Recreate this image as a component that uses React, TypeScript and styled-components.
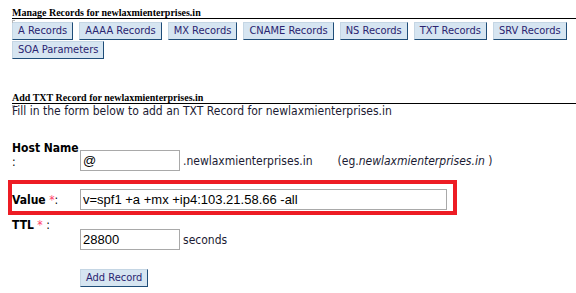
import React from 'react';
import styled, { createGlobalStyle } from 'styled-components';

const GlobalStyle = createGlobalStyle`
  body {
    margin: 0;
    background: #fff;
    font-family: "DejaVu Sans Condensed", "DejaVu Sans", sans-serif;
    font-stretch: condensed;
    font-size: 12px;
    color: #1b1b33;
  }
`;

const Page = styled.div`
  width: 564px;
  padding: 7px 0 0 12px;
`;

const SectionTitle = styled.h2<{ $gap?: number }>`
  position: relative;
  margin: ${(p) => p.$gap || 0}px 0 0;
  font: bold 10px/11px "Liberation Serif", serif;
  color: #000;
  border-bottom: 1px solid #000;
`;

const Marker = styled.span`
  position: absolute;
  left: 0;
  top: 13px;
  width: 2px;
  height: 2px;
  border-left: 1px solid #b8b8b8;
  border-top: 1px solid #b8b8b8;
`;

const ButtonBar = styled.div`
  margin-top: 3px;
  display: flex;
  flex-direction: column;
  gap: 1px;
`;

const ButtonRow = styled.div`
  display: flex;
  gap: 6px;
`;

const TabButton = styled.button<{ $indent?: number }>`
  box-sizing: border-box;
  height: 18px;
  margin: 0 0 0 ${(p) => p.$indent || 0}px;
  padding: 0 5px;
  font: 11px/16px "DejaVu Sans Condensed", "DejaVu Sans", sans-serif;
  font-stretch: condensed;
  color: #2a2470;
  background: #d6e5f1;
  border: 1px solid;
  border-color: #c5d6e4 #1f4d78 #1f4d78 #c5d6e4;
  border-radius: 0;
  cursor: pointer;
  white-space: nowrap;
`;

const Intro = styled.p`
  margin: 0;
  line-height: 14px;
`;

const Row = styled.div<{ $gap: number; $center?: boolean }>`
  display: flex;
  align-items: ${(p) => (p.$center ? 'center' : 'flex-start')};
  margin-top: ${(p) => p.$gap}px;
`;

const Label = styled.div`
  width: 68px;
  flex: none;
  line-height: 14px;
  color: #000;
  white-space: nowrap;

  b {
    font-weight: bold;
  }
`;

const Required = styled.span`
  color: #ff3d6a;
`;

const Field = styled.div<{ $offset?: number }>`
  display: flex;
  align-items: center;
  margin-top: ${(p) => p.$offset || 0}px;
`;

const TextInput = styled.input<{ $width: number }>`
  box-sizing: border-box;
  width: ${(p) => p.$width}px;
  height: 21px;
  margin: 0;
  padding: 0 2px;
  font: 13px "Liberation Sans", Arial, sans-serif;
  color: #000;
  border: 1px solid #a9a9a9;
  border-radius: 0;
  outline: none;
`;

const Suffix = styled.span`
  margin-left: 3px;
`;

const Hint = styled.span`
  margin-left: 25px;

  i {
    font-style: italic;
  }
`;

const Highlight = styled.div`
  box-sizing: border-box;
  width: 449px;
  margin: 9px 0 0 -4px;
  padding: 5px 0 1px;
  border: 4px solid #ed1c24;
`;

const ValueRow = styled.div`
  display: flex;
  align-items: center;
`;

const records = [
  ['A Records', 'AAAA Records', 'MX Records', 'CNAME Records', 'NS Records', 'TXT Records', 'SRV Records'],
  ['SOA Parameters'],
];

const domain = 'newlaxmienterprises.in';

const App: React.FC = () => {
  return (
    <>
      <GlobalStyle />
      <Page>
        <SectionTitle>
          Manage Records for {domain}
          <Marker />
        </SectionTitle>

        <ButtonBar>
          {records.map((row, i) => (
            <ButtonRow key={i}>
              {row.map((name) => (
                <TabButton key={name}>{name}</TabButton>
              ))}
            </ButtonRow>
          ))}
        </ButtonBar>

        <SectionTitle $gap={33}>
          Add TXT Record for {domain}
          <Marker />
        </SectionTitle>
        <Intro>Fill in the form below to add an TXT Record for {domain}</Intro>

        <Row $gap={23}>
          <Label>
            <b>Host Name</b>
            <br />:
          </Label>
          <Field $offset={9}>
            <TextInput $width={100} defaultValue="@" />
            <Suffix>.{domain}</Suffix>
            <Hint>
              (eg.<i>{domain}</i> )
            </Hint>
          </Field>
        </Row>

        <Highlight>
          <ValueRow>
            <Label>
              <b>Value</b> <Required>*</Required>:
            </Label>
            <TextInput $width={367} defaultValue="v=spf1 +a +mx +ip4:103.21.58.66 -all" />
          </ValueRow>
        </Highlight>

        <Row $gap={3}>
          <Label>
            <b>TTL</b> <Required>*</Required> :
          </Label>
          <Field $offset={11}>
            <TextInput $width={100} defaultValue="28800" />
            <Suffix>seconds</Suffix>
          </Field>
        </Row>

        <Row $gap={19}>
          <TabButton $indent={68}>Add Record</TabButton>
        </Row>
      </Page>
    </>
  );
};

export default App;
